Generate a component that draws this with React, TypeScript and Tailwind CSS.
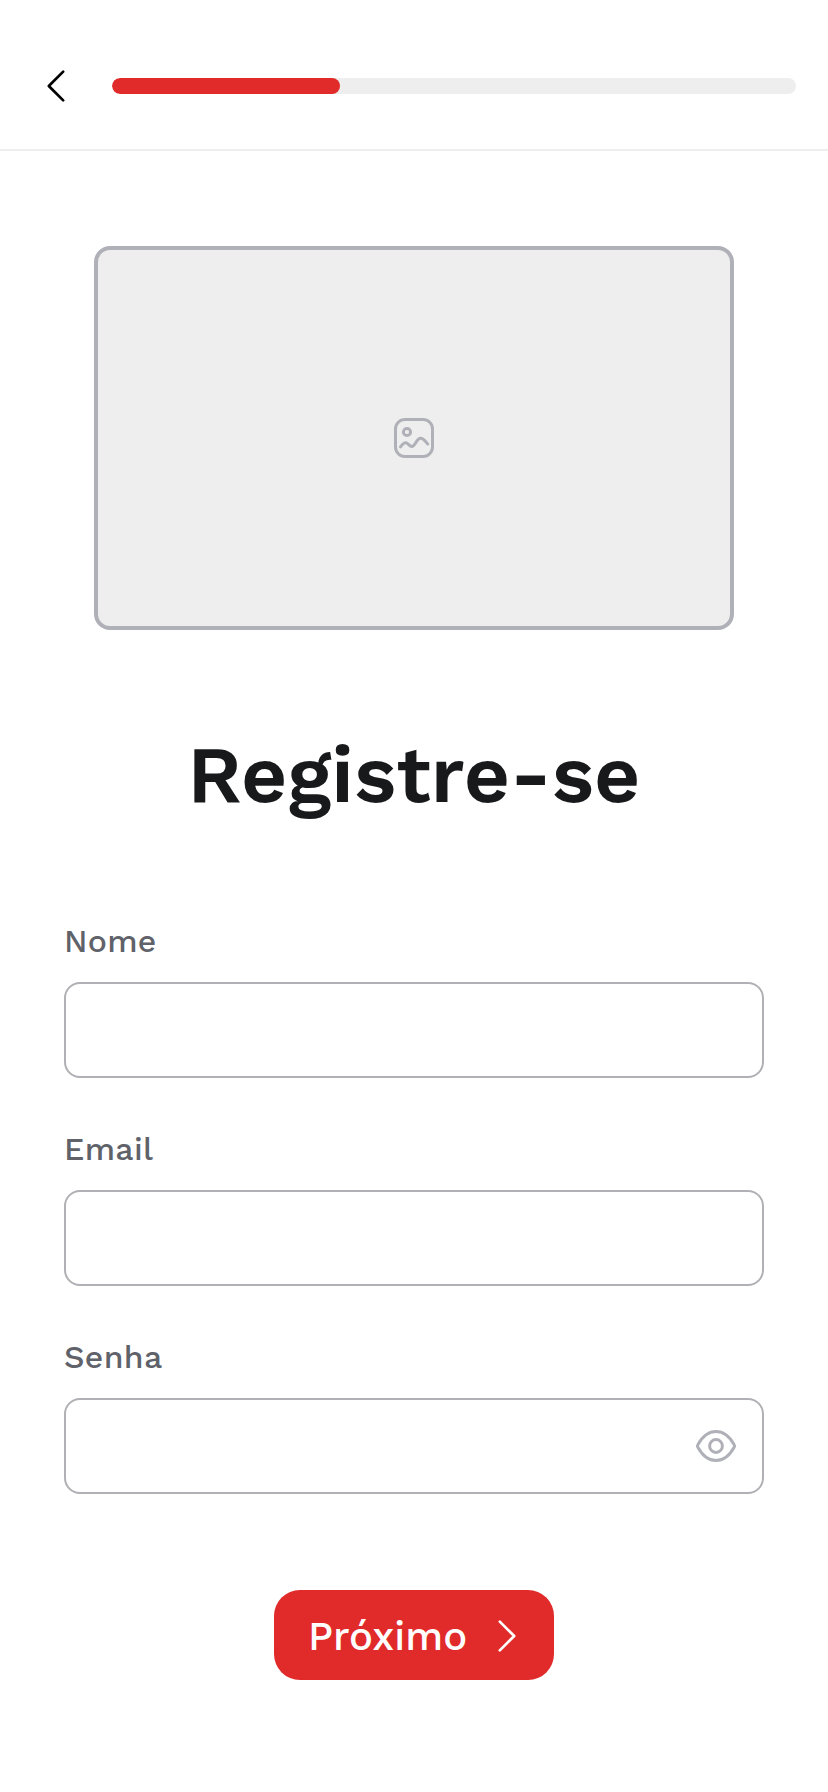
import React from "react";

const FONT = "font-['Work_Sans','Open_Sans','Noto_Sans',sans-serif]";

function EyeIcon() {
  return (
    <svg width="40" height="32" viewBox="0 0 40 32" fill="none" stroke="#b0b0b8" strokeWidth="3" strokeLinecap="round" strokeLinejoin="round">
      <path d="M2 17.500c-.7-1-.7-2 0-3C6.300 6.700 12.300 1.500 20 1.500s13.700 5.200 18 13c.7 1 .7 2 0 3C33.700 25.300 27.700 30.500 20 30.500S6.300 25.300 2 17.500Z" />
      <circle cx="20" cy="16" r="6.400" />
    </svg>
  );
}

function PictureIcon() {
  return (
    <svg width="40" height="40" viewBox="0 0 40 40" fill="none" stroke="#b0b0b8" strokeWidth="3" strokeLinecap="round" strokeLinejoin="round">
      <rect x="1.500" y="1.500" width="37" height="37" rx="9.500" />
      <circle cx="13" cy="14" r="3.600" />
      <path d="M6.500 28.800c1.800-2.300 3.300-4 5-4 2.700 0 3.700 3.700 6.300 3.700 3.700 0 4.600-8.200 8.700-8.200 2.900 0 4.900 3 7.200 5.700" />
    </svg>
  );
}

function Field({ id, label, type, children }: { id: string; label: string; type: string; children?: React.ReactNode }) {
  return (
    <div className="flex flex-col gap-5">
      <label htmlFor={id} className="flex h-10 items-center pb-0.5 text-[32px] leading-[38px] font-medium tracking-[0.32px] text-[#60626a]">
        {label}
      </label>
      <div className="flex h-24 items-center rounded-2xl border-2 border-[#b0b0b5] pr-[26px] pl-6">
        <input id={id} type={type} className="h-full min-w-0 flex-1 bg-transparent text-[32px] outline-none" />
        {children}
      </div>
    </div>
  );
}

export default function App() {
  return (
    <div className={`flex h-[1792px] w-[828px] flex-col bg-white ${FONT}`}>
      <header className="flex h-[151px] items-center border-b-2 border-[#eeeeee] pt-[23px] pr-8 pl-[46px]">
        <button aria-label="Voltar" className="flex w-[66px]">
          <svg width="20" height="34" viewBox="0 0 20 34" fill="none" stroke="#000" strokeWidth="2.700" strokeLinecap="round" strokeLinejoin="round">
            <path d="M17.200 2.600 2.800 17l14.400 14.400" />
          </svg>
        </button>
        <div className="h-4 flex-1 overflow-hidden rounded-full bg-[#eeeeee]">
          <div className="h-full w-1/3 rounded-full bg-[#e12a2a]" />
        </div>
      </header>
      <main className="flex flex-col items-center pt-[95px]">
        <div className="flex h-96 w-[640px] items-center justify-center rounded-2xl border-4 border-[#b0b0b8] bg-[#eeeeee]">
          <PictureIcon />
        </div>
        <h1 className="mt-[93px] text-[80px] leading-[104px] font-semibold text-[#18191b]">Registre-se</h1>
        <form className="mt-[95px] flex w-[700px] flex-col gap-[52px]">
          <Field id="nome" label="Nome" type="text" />
          <Field id="email" label="Email" type="email" />
          <Field id="senha" label="Senha" type="password">
            <EyeIcon />
          </Field>
        </form>
        <button className="mt-24 flex h-[90px] w-[280px] items-center justify-between rounded-[26px] bg-[#e12a2a] pt-0.5 pr-[37px] pl-[34px] text-white">
          <span className="pt-0.5 text-[40px] leading-[48px] font-medium">Próximo</span>
          <svg width="20" height="34" viewBox="0 0 20 34" fill="none" stroke="currentColor" strokeWidth="2.700" strokeLinecap="round" strokeLinejoin="round">
            <path d="M2.800 2.600 17.200 17 2.800 31.400" />
          </svg>
        </button>
      </main>
    </div>
  );
}
